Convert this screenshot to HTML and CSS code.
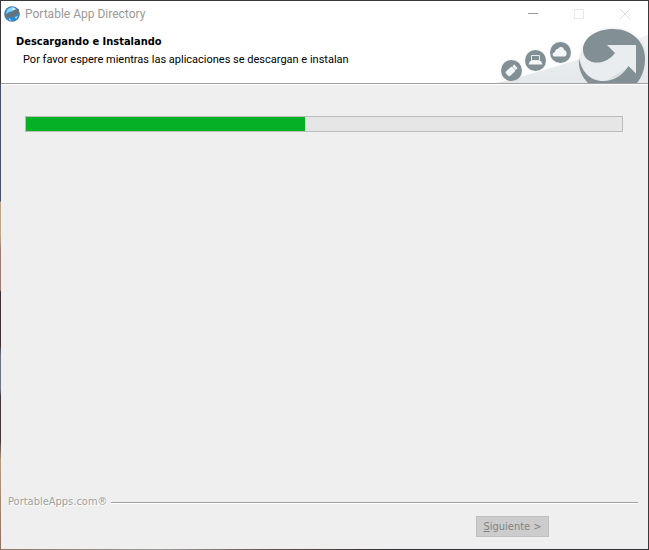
FILE: index.html
```html
<!DOCTYPE html>
<html lang="es">
<head>
<meta charset="utf-8">
<title>Portable App Directory</title>
<link rel="stylesheet" href="styles.css">
</head>
<body>
<main class="window">
  <header class="titlebar">
    <svg class="app-icon" viewBox="0 0 16 16" aria-hidden="true">
      <circle cx="8" cy="8" r="7.8" fill="#4a6f92"/>
      <circle cx="8" cy="8" r="7" fill="#2490dc"/>
      <path d="M3 4C5 1 10 0 12 3L9 5 5 6 2 8z" fill="#8bd0f6"/>
      <path d="M8 1.5l4 1.5-3 1.5z" fill="#e4f6ff"/>
      <path d="M1 9l4-2 3-1 2-2 5-1v5l-3 1-2 2-5 1-3-1z" fill="#66737d"/>
      <path d="M5 12l3 3-3-1zM11 11l3-1-2 3z" fill="#aee2fc"/>
    </svg>
    <span class="caption">Portable App Directory</span>
    <button class="win-button" type="button" aria-label="Minimizar"><svg viewBox="0 0 10 10"><path d="M0 4.5h10" stroke="#999"/></svg></button>
    <button class="win-button" type="button" aria-label="Maximizar" disabled><svg viewBox="0 0 10 10"><path d="M.5.5h9v9h-9z" stroke="#e8e8e8"/></svg></button>
    <button class="win-button" type="button" aria-label="Cerrar" disabled><svg viewBox="0 0 10 10"><path d="M0 0l10 10M10 0L0 10" stroke="#dedede"/></svg></button>
  </header>
  <section class="banner">
    <div class="heading">
      <h1>Descargando e Instalando</h1>
      <p>Por favor espere mientras las aplicaciones se descargan e instalan</p>
    </div>
    <svg class="art" viewBox="490 26 158 57" aria-hidden="true">
      <defs>
        <linearGradient id="slope" x1="0" y1="0" x2="0" y2="1"><stop offset="0" stop-color="#f0f3f4"/><stop offset="1" stop-color="#e4e8ea"/></linearGradient>
        <filter id="glow" x="-20%" y="-20%" width="140%" height="140%"><feGaussianBlur stdDeviation="1.5"/></filter>
      </defs>
      <path d="M497 83Q575 63 648 35V83z" fill="url(#slope)"/>
      <g fill="#c9d0d4" opacity=".4" filter="url(#glow)"><circle cx="511.5" cy="70.5" r="10.5"/><circle cx="535.5" cy="60.5" r="10.5"/><circle cx="560.5" cy="52.5" r="10.5"/><ellipse cx="613" cy="58" rx="33" ry="30"/></g>
      <path d="M579 58L583 48 608 44 637 44V75L628 67 605 82 585 76z" fill="#e9edef"/>
      <g fill="#829095">
        <circle cx="511.5" cy="70.5" r="10.5"/><circle cx="535.5" cy="60.5" r="10.5"/><circle cx="560.5" cy="52.5" r="10.5"/>
        <path d="M607 45L615 53C609 61 600 64 592 62C586 60 583 55 583 50C583 38 596 29 613 29C632 29 645 42 645 58C645 69 642 77 637 83H588C581 76 578 67 579 58C582 74 592 81 603 81C614 81 623 75 628.5 66L636 73.5V45z"/>
      </g>
      <g fill="#f3f6f7">
        <g transform="rotate(-43 511.5 70.5)"><rect x="505.5" y="67.5" width="9" height="6" rx="1.5"/><path d="M515 68h2.500v5H515z"/></g>
        <path d="M554.5 56.5C552 56.5 552 52.5 555 52C555 49.5 557 49 558 49C559.5 46 564 46.5 564 50C566.5 50 568 55 565 56.5z"/>
        <path d="M530 61h11l1.500 3.500h-14z"/>
      </g>
      <path d="M531.5 55.5h8v5h-8z" fill="#829095" stroke="#e9edef"/>
    </svg>
  </section>
  <section class="content">
    <div class="progress" role="progressbar" aria-label="Progreso de la instalación" aria-valuemin="0" aria-valuemax="100" aria-valuenow="47"><div class="progress-fill" style="width:46.8%"></div></div>
  </section>
  <footer class="footer">
    <div class="brand"><span>PortableApps.com®</span><hr></div>
    <div class="actions"><button class="next" type="button" disabled><u>S</u>iguiente &gt;</button></div>
  </footer>
</main>
</body>
</html>
```
FILE: styles.css
```css
* { box-sizing: border-box; }

body {
  margin: 0;
  min-height: 100vh;
  display: flex;
  padding: 1px;
  font: 11px/14px "DejaVu Sans Condensed", "DejaVu Sans", sans-serif;
  color: #000;
  background:
    linear-gradient(90deg, #8f7868 0%, #9b9b98 25%, #66524d 42%, #303135 60%, #303135 100%) bottom / 100% 1px no-repeat,
    linear-gradient(#3a383b 0 83px, #465064 84px 201px, #b9a68b 202px 236px, #987c74 250px 290px, #3d3033 292px 345px, #6b7383 355px 390px, #40353a 396px 440px, #b19a7f 460px, #8f7062 100%) left / 1px 100% no-repeat,
    #39383b;
}

.window {
  flex: 1;
  min-width: 0;
  display: flex;
  flex-direction: column;
  background: #efefef;
}

.titlebar {
  display: flex;
  align-items: center;
  height: 25px;
  padding-left: 3px;
  background: #fff;
}

.app-icon { width: 16px; height: 16px; }

.caption {
  flex: 1;
  margin-left: 5px;
  font: 12px/16px Roboto, "Open Sans", sans-serif;
  color: #999;
}

.win-button {
  width: 46px;
  height: 24px;
  padding: 0;
  border: 0;
  background: none;
}

.win-button svg { display: block; width: 10px; height: 10px; margin: auto; fill: none; }

.banner {
  display: flex;
  justify-content: space-between;
  background: #fff;
  border-bottom: 1px solid #a0a0a0;
  box-shadow: 0 1px #fff;
}

.heading { padding: 9px 0 0 15px; white-space: nowrap; }

h1 { margin: 0; font-size: 11px; line-height: 14px; }

.heading p { margin: 4px 0 0 7px; font-family: Roboto, "Open Sans", sans-serif; }

.art { display: block; flex: none; width: 158px; height: 57px; }

.content { flex: 1; padding: 32px 25px 0 24px; }

.progress {
  height: 16px;
  border: 1px solid #bcbcbc;
  background: #e6e6e6;
}

.progress-fill { height: 100%; background: #06b025; }

.footer { padding: 0 10px 12px 7px; }

.brand {
  display: flex;
  align-items: center;
  gap: 4px;
  color: #a0a0a0;
  text-shadow: 1px 1px #fff;
}

.brand hr {
  flex: 1;
  margin: 2px 0 0;
  border: 0;
  border-top: 1px solid #a0a0a0;
  border-bottom: 1px solid #fff;
}

.actions { display: flex; justify-content: flex-end; padding: 7px 89px 0 0; }

.next {
  width: 73px;
  height: 21px;
  padding: 0;
  border: 1px solid #bfbfbf;
  background: #ccc;
  color: #838383;
  font: inherit;
}
```
